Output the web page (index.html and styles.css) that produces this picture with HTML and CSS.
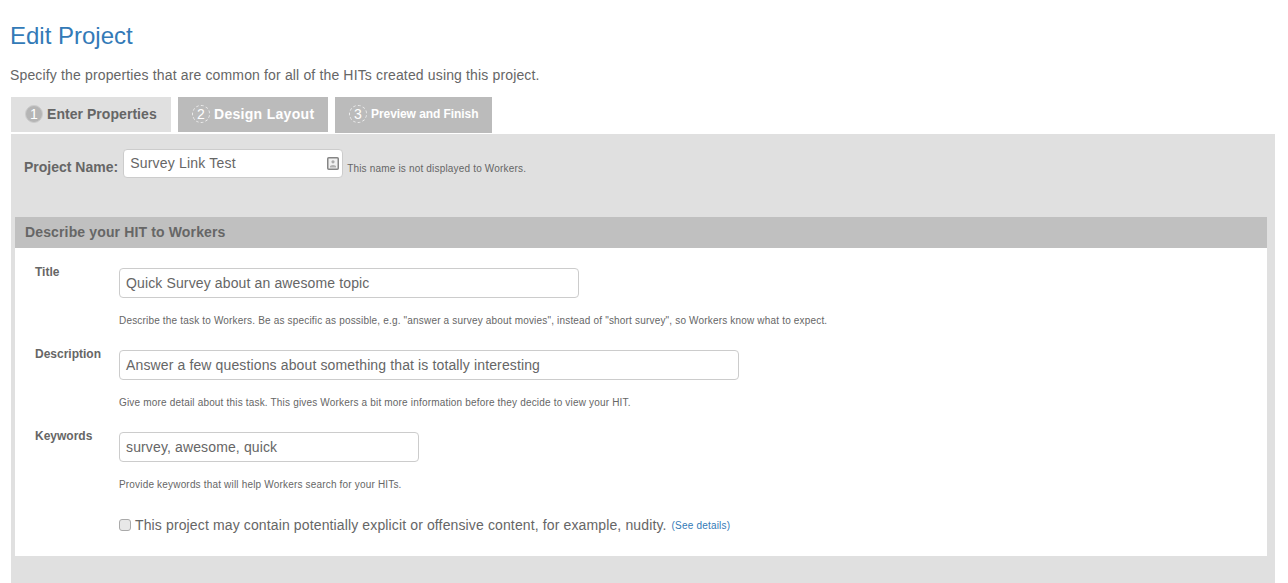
FILE: index.html
```html
<!DOCTYPE html>
<html lang="en">
<head>
<meta charset="utf-8">
<title>Edit Project</title>
<link rel="stylesheet" href="styles.css">
</head>
<body>
<h1 class="heading">Edit Project</h1>
<p class="intro">Specify the properties that are common for all of the HITs created using this project.</p>
<div class="tabs">
  <div class="tab tab-active"><span class="num num-solid">1</span><span class="tab-label">Enter Properties</span></div>
  <div class="tab tab-2"><span class="num">2</span><span class="tab-label">Design Layout</span></div>
  <div class="tab tab-3"><span class="num">3</span><span class="tab-label tab-label-small">Preview and Finish</span></div>
</div>
<div class="panel">
  <div class="name-row">
    <label class="name-label">Project Name:</label>
    <div class="name-box">
      <span>Survey Link Test</span>
      <svg class="contact" width="12" height="13" viewBox="0 0 12 13"><rect x="0.75" y="0.75" width="10.5" height="11.5" rx="1" fill="#f0f0f0" stroke="#858585" stroke-width="1.5"/><circle cx="6" cy="4.800" r="1.600" fill="#aaa"/><path d="M3 10.500V9q3-2 6 0v1.500z" fill="#b0b0b0"/></svg>
    </div>
    <span class="hint name-hint">This name is not displayed to Workers.</span>
  </div>
  <section class="card">
    <h2 class="card-head">Describe your HIT to Workers</h2>
    <div class="card-body">
      <div class="field">
        <div class="field-label">Title</div>
        <div class="field-main">
          <div class="box box-title">Quick Survey about an awesome topic</div>
          <div class="hint">Describe the task to Workers. Be as specific as possible, e.g. "answer a survey about movies", instead of "short survey", so Workers know what to expect.</div>
        </div>
      </div>
      <div class="field">
        <div class="field-label">Description</div>
        <div class="field-main">
          <div class="box box-desc">Answer a few questions about something that is totally interesting</div>
          <div class="hint">Give more detail about this task. This gives Workers a bit more information before they decide to view your HIT.</div>
        </div>
      </div>
      <div class="field">
        <div class="field-label">Keywords</div>
        <div class="field-main">
          <div class="box box-keys">survey, awesome, quick</div>
          <div class="hint">Provide keywords that will help Workers search for your HITs.</div>
        </div>
      </div>
      <div class="check-row">
        <span class="check"></span>
        <span class="check-text">This project may contain potentially explicit or offensive content, for example, nudity.</span>
        <a class="details" href="#">(See details)</a>
      </div>
    </div>
  </section>
</div>
</body>
</html>
```
FILE: styles.css
```css
html, body { margin: 0; padding: 0; background: #fff; height: 583px; overflow: hidden; }
body { font-family: "Liberation Sans", Arial, sans-serif; color: #666; padding-left: 11px; padding-right: 13px; }
.heading { margin: 0 0 0 -1px; padding-top: 21px; font-size: 24px; line-height: 30px; font-weight: 400; color: #337ab7; }
.intro { margin: 0 0 0 -1px; padding-top: 14px; font-size: 14px; line-height: 20px; letter-spacing: 0.15px; }
.tabs { display: flex; gap: 7px; margin-top: 12px; height: 37px; align-items: flex-start; }
.tab { display: flex; align-items: center; background: #bbb; color: #fff; font-weight: 700; font-size: 14px; height: 35px; box-sizing: border-box; padding: 0 0 1px 14px; letter-spacing: 0.3px; }
.tab-active { width: 160px; background: #e0e0e0; color: #666; letter-spacing: 0.05px; }
.tab-2 { width: 150px; }
.tab-3 { width: 157px; height: 36px; padding-bottom: 2px; }
.num { width: 18px; height: 18px; border-radius: 50%; border: 1px dashed #eee; display: flex; align-items: center; justify-content: center; font-weight: 400; font-size: 14px; margin-right: 4px; box-sizing: border-box; color: #fff; letter-spacing: 0; }
.num-solid { background: #b5b5b5; border: 1px solid #ccc; }
.tab-label-small { font-size: 12px; letter-spacing: -0.07px; }
.panel { background: #e0e0e0; height: 449px; padding: 0 8px 0 4px; box-sizing: border-box; }
.name-row { display: flex; align-items: flex-start; padding: 15px 0 0 9px; height: 83px; box-sizing: border-box; }
.name-label { font-weight: 700; font-size: 14px; margin-top: 10px; margin-right: 5px; }
.name-box { width: 220px; height: 29px; background: #fff; border: 1px solid #ccc; border-radius: 4px; box-sizing: border-box; padding: 0 6px 1px; display: flex; justify-content: space-between; align-items: center; font-size: 14px; letter-spacing: 0.2px; }
.contact { display: block; margin-right: -3px; }
.name-hint { margin: 14px 0 0 4px; letter-spacing: 0.15px; }
.hint { font-size: 10px; line-height: 12px; color: #666; letter-spacing: 0.18px; }
.card { background: #fff; }
.card-head { margin: 0; background: #c0c0c0; height: 31px; font-size: 14px; line-height: 30px; font-weight: 700; color: #666; padding-left: 10px; letter-spacing: 0.14px; }
.card-body { height: 308px; box-sizing: border-box; padding-top: 17px; }
.field { display: flex; height: 82px; }
.field-label { width: 104px; padding-left: 20px; box-sizing: border-box; font-size: 12px; font-weight: 700; line-height: 14px; }
.field-main { padding-top: 3px; }
.box { height: 30px; background: #fff; border: 1px solid #ccc; border-radius: 4px; box-sizing: border-box; padding: 0 6px; font-size: 14px; line-height: 28px; margin-bottom: 17px; letter-spacing: 0.13px; }
.box-title { width: 460px; }
.box-desc { width: 620px; }
.box-keys { width: 300px; }
.check-row { display: flex; align-items: center; padding-left: 104px; margin-top: 4px; height: 20px; }
.check { width: 12px; height: 12px; border: 1px solid #aaa; border-radius: 3px; background: #e8e8e8; box-sizing: border-box; margin-right: 4px; }
.check-text { font-size: 14px; letter-spacing: 0.13px; }
.details { font-size: 10px; color: #337ab7; text-decoration: none; margin-left: 5px; letter-spacing: 0.2px; }
```
